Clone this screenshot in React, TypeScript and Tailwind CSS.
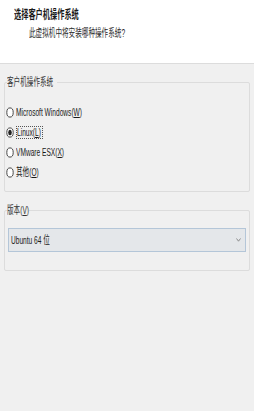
import React from 'react'

const font = "font-['Liberation_Sans','Noto_Sans_CJK_SC',sans-serif]"

function Squeeze({ children, className = '' }: { children: React.ReactNode; className?: string }) {
  return (
    <span className={`inline-block origin-left scale-x-[0.6] whitespace-nowrap ${className}`}>
      {children}
    </span>
  )
}

function Radio({ checked }: { checked?: boolean }) {
  return (
    <svg width="8" height="11" viewBox="0 0 8 11" className="shrink-0">
      <ellipse cx="4" cy="5.5" rx="3.2" ry="4.6" fill="#fff" stroke="#333" strokeWidth="0.9" />
      {checked && <ellipse cx="4" cy="5.5" rx="1.8" ry="2.8" fill="#222" />}
    </svg>
  )
}

interface Option {
  text: string
  key: string
  checked?: boolean
}

const options: Option[] = [
  { text: 'Microsoft Windows', key: 'W' },
  { text: 'Linux', key: 'L', checked: true },
  { text: 'VMware ESX', key: 'X' },
  { text: '其他', key: 'O' },
]

export default function App() {
  return (
    <div className={`w-[254px] h-[411px] bg-[#f0f0f0] text-[#1a1a1a] ${font}`}>
      <div className="h-[64px] bg-white border-b border-[#dcdcdc] pt-[8px] pl-[14px]">
        <div className="text-[12px] leading-[14px] font-bold">
          <Squeeze>选择客户机操作系统</Squeeze>
        </div>
        <div className="text-[11px] leading-[13px] mt-[5px] ml-[15px] text-[#2a2a2a]">
          <Squeeze>此虚拟机中将安装哪种操作系统?</Squeeze>
        </div>
      </div>

      <div className="relative mt-[18px] mx-[4px] h-[110px] border border-[#dcdcdc] rounded-[2px]">
        <div className="absolute left-[2px] top-[-7px] w-[50px] h-[12px] bg-[#f0f0f0] text-[11px] leading-[12px] text-[#333]">
          <Squeeze>客户机操作系统</Squeeze>
        </div>
        <div className="pt-[19px] pl-[1px] flex flex-col">
          {options.map((o) => (
            <div key={o.key} className="h-[20px] flex items-center gap-[2px]">
              <Radio checked={o.checked} />
              <div
                className={`h-[13px] flex items-center text-[11px] leading-[12px] ${
                  o.checked ? 'w-[27px] overflow-visible border border-dotted border-[#555]' : ''
                }`}
              >
                <Squeeze>
                  {o.text}(<span className="underline">{o.key}</span>)
                </Squeeze>
              </div>
            </div>
          ))}
        </div>
      </div>

      <div className="relative mt-[18px] mx-[4px] h-[61px] border border-[#dcdcdc] rounded-[2px]">
        <div className="absolute left-[2px] top-[-7px] w-[22px] h-[12px] bg-[#f0f0f0] text-[11px] leading-[12px] text-[#333]">
          <Squeeze>
            版本(<span className="underline">V</span>)
          </Squeeze>
        </div>
        <div className="pt-[17px] px-[3px]">
          <div className="h-[24px] bg-[#e4e7ea] border border-[#b4c6d8] flex items-center justify-between pl-[2px] pr-[4px]">
            <div className="text-[11px] leading-[12px]">
              <Squeeze>Ubuntu 64 位</Squeeze>
            </div>
            <svg width="5" height="4" viewBox="0 0 5 4">
              <path d="M0.5 0.5 L2.5 3.2 L4.5 0.5" fill="none" stroke="#777" strokeWidth="0.8" />
            </svg>
          </div>
        </div>
      </div>
    </div>
  )
}
